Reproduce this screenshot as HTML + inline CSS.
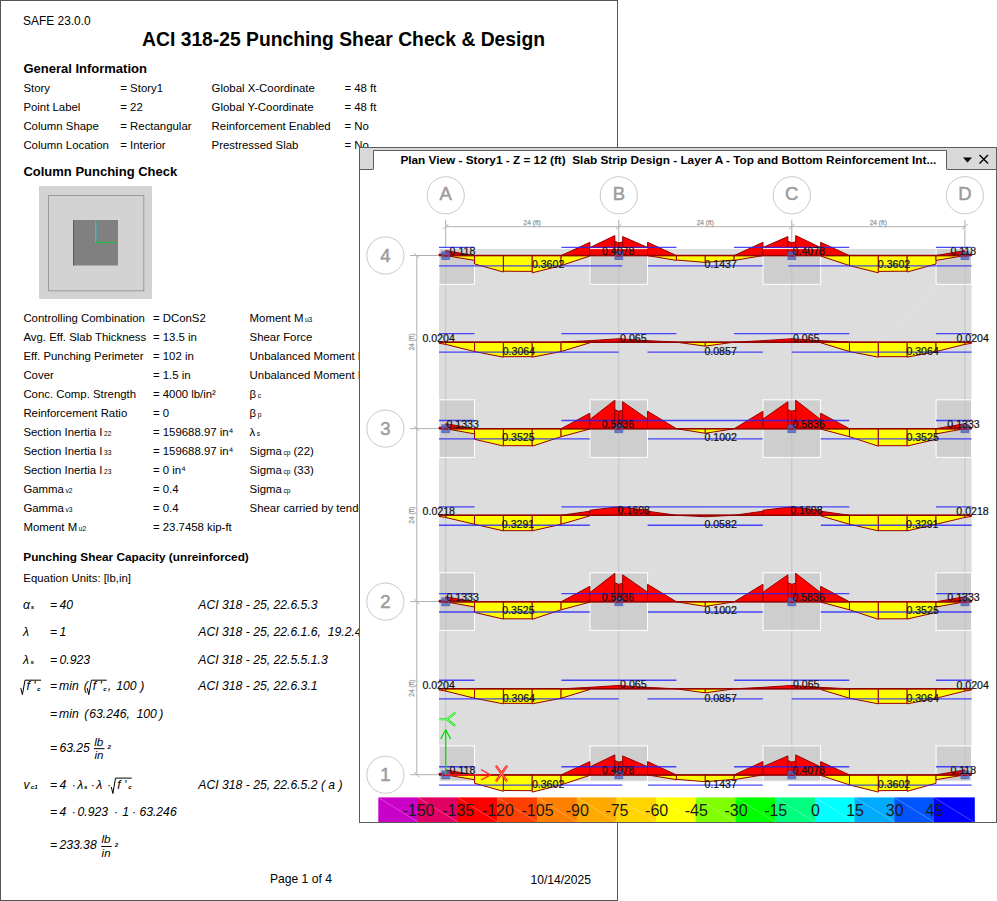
<!DOCTYPE html>
<html><head><meta charset="utf-8"><style>
html,body{margin:0;padding:0;background:#fff;width:997px;height:901px;overflow:hidden}
body{position:relative;font-family:"Liberation Sans",sans-serif;color:#000}
.doc{position:absolute;left:0;top:0;width:616px;height:899px;border:1px solid #555;background:#fff}
.t{position:absolute;white-space:pre;line-height:1;color:#000}
.sb{font-size:0.58em;margin-left:1.5px}
.sq{border-top:1px solid #000;padding-left:1px}
.fr{display:inline-block;vertical-align:middle;text-align:center;font-size:0.95em}
.nu{display:block;border-bottom:1px solid #000;line-height:1}
.de{display:block;line-height:1}
.sp2{font-size:0.6em;vertical-align:0.3em}
svg{position:absolute;left:0;top:0}
svg text{font-family:"Liberation Sans",sans-serif}
</style></head><body>
<div class="doc"></div>
<div class="t" style="left:23px;top:16.08px;font-size:11.95px;">SAFE 23.0.0</div>
<div class="t" style="left:142.1px;top:30.36px;font-size:19.3px;font-weight:bold">ACI 318-25 Punching Shear Check &amp; Design</div>
<div class="t" style="left:23.4px;top:62.00px;font-size:13px;font-weight:bold">General Information</div>
<div class="t" style="left:23.4px;top:82.95px;font-size:11.4px;">Story</div>
<div class="t" style="left:120.3px;top:82.95px;font-size:11.4px;">= Story1</div>
<div class="t" style="left:211.6px;top:82.95px;font-size:11.4px;">Global X-Coordinate</div>
<div class="t" style="left:344.4px;top:82.95px;font-size:11.4px;">= 48 ft</div>
<div class="t" style="left:23.4px;top:101.80px;font-size:11.4px;">Point Label</div>
<div class="t" style="left:120.3px;top:101.80px;font-size:11.4px;">= 22</div>
<div class="t" style="left:211.6px;top:101.80px;font-size:11.4px;">Global Y-Coordinate</div>
<div class="t" style="left:344.4px;top:101.80px;font-size:11.4px;">= 48 ft</div>
<div class="t" style="left:23.4px;top:120.65px;font-size:11.4px;">Column Shape</div>
<div class="t" style="left:120.3px;top:120.65px;font-size:11.4px;">= Rectangular</div>
<div class="t" style="left:211.6px;top:120.65px;font-size:11.4px;">Reinforcement Enabled</div>
<div class="t" style="left:344.4px;top:120.65px;font-size:11.4px;">= No</div>
<div class="t" style="left:23.4px;top:139.50px;font-size:11.4px;">Column Location</div>
<div class="t" style="left:120.3px;top:139.50px;font-size:11.4px;">= Interior</div>
<div class="t" style="left:211.6px;top:139.50px;font-size:11.4px;">Prestressed Slab</div>
<div class="t" style="left:344.4px;top:139.50px;font-size:11.4px;">= No</div>
<div class="t" style="left:23.4px;top:165.10px;font-size:13px;font-weight:bold">Column Punching Check</div>
<div class="t" style="left:23.4px;top:312.55px;font-size:11.4px;">Controlling Combination</div>
<div class="t" style="left:152.9px;top:312.55px;font-size:11.4px;">= DConS2</div>
<div class="t" style="left:249.6px;top:312.55px;font-size:11.4px;">Moment M<span class="sb">u3</span></div>
<div class="t" style="left:23.4px;top:331.58px;font-size:11.4px;">Avg. Eff. Slab Thickness</div>
<div class="t" style="left:152.9px;top:331.58px;font-size:11.4px;">= 13.5 in</div>
<div class="t" style="left:249.6px;top:331.58px;font-size:11.4px;">Shear Force</div>
<div class="t" style="left:23.4px;top:350.61px;font-size:11.4px;">Eff. Punching Perimeter</div>
<div class="t" style="left:152.9px;top:350.61px;font-size:11.4px;">= 102 in</div>
<div class="t" style="left:249.6px;top:350.61px;font-size:11.4px;">Unbalanced Moment M</div>
<div class="t" style="left:23.4px;top:369.64px;font-size:11.4px;">Cover</div>
<div class="t" style="left:152.9px;top:369.64px;font-size:11.4px;">= 1.5 in</div>
<div class="t" style="left:249.6px;top:369.64px;font-size:11.4px;">Unbalanced Moment M</div>
<div class="t" style="left:23.4px;top:388.67px;font-size:11.4px;">Conc. Comp. Strength</div>
<div class="t" style="left:152.9px;top:388.67px;font-size:11.4px;">= 4000 lb/in²</div>
<div class="t" style="left:249.6px;top:388.67px;font-size:11.4px;">β<span class="sb">c</span></div>
<div class="t" style="left:23.4px;top:407.70px;font-size:11.4px;">Reinforcement Ratio</div>
<div class="t" style="left:152.9px;top:407.70px;font-size:11.4px;">= 0</div>
<div class="t" style="left:249.6px;top:407.70px;font-size:11.4px;">β<span class="sb">p</span></div>
<div class="t" style="left:23.4px;top:426.73px;font-size:11.4px;">Section Inertia I<span class="sb">22</span></div>
<div class="t" style="left:152.9px;top:426.73px;font-size:11.4px;">= 159688.97 in⁴</div>
<div class="t" style="left:249.6px;top:426.73px;font-size:11.4px;">λ<span class="sb">s</span></div>
<div class="t" style="left:23.4px;top:445.76px;font-size:11.4px;">Section Inertia I<span class="sb">33</span></div>
<div class="t" style="left:152.9px;top:445.76px;font-size:11.4px;">= 159688.97 in⁴</div>
<div class="t" style="left:249.6px;top:445.76px;font-size:11.4px;">Sigma<span class="sb">cp</span> (22)</div>
<div class="t" style="left:23.4px;top:464.79px;font-size:11.4px;">Section Inertia I<span class="sb">23</span></div>
<div class="t" style="left:152.9px;top:464.79px;font-size:11.4px;">= 0 in⁴</div>
<div class="t" style="left:249.6px;top:464.79px;font-size:11.4px;">Sigma<span class="sb">cp</span> (33)</div>
<div class="t" style="left:23.4px;top:483.82px;font-size:11.4px;">Gamma<span class="sb">v2</span></div>
<div class="t" style="left:152.9px;top:483.82px;font-size:11.4px;">= 0.4</div>
<div class="t" style="left:249.6px;top:483.82px;font-size:11.4px;">Sigma<span class="sb">cp</span></div>
<div class="t" style="left:23.4px;top:502.85px;font-size:11.4px;">Gamma<span class="sb">v3</span></div>
<div class="t" style="left:152.9px;top:502.85px;font-size:11.4px;">= 0.4</div>
<div class="t" style="left:249.6px;top:502.85px;font-size:11.4px;">Shear carried by tendons</div>
<div class="t" style="left:23.4px;top:521.88px;font-size:11.4px;">Moment M<span class="sb">u2</span></div>
<div class="t" style="left:152.9px;top:521.88px;font-size:11.4px;">= 23.7458 kip-ft</div>
<div class="t" style="left:249.6px;top:521.88px;font-size:11.4px;"></div>
<div class="t" style="left:23.3px;top:552.11px;font-size:11.8px;font-weight:bold">Punching Shear Capacity (unreinforced)</div>
<div class="t" style="left:23.3px;top:573.45px;font-size:11.4px;">Equation Units: [lb,in]</div>
<div class="t" style="left:23px;top:598.67px;font-size:12.2px;font-style:italic">α</div>
<div class="t" style="left:30.8px;top:604.25px;font-size:6.2px;font-weight:bold;font-style:italic">s</div>
<div class="t" style="left:49.9px;top:598.67px;font-size:12.2px;font-style:italic">=</div>
<div class="t" style="left:59.6px;top:598.67px;font-size:12.2px;font-style:italic">40</div>
<div class="t" style="left:198.3px;top:598.67px;font-size:12.2px;font-style:italic">ACI 318 - 25, 22.6.5.3</div>
<div class="t" style="left:23px;top:626.17px;font-size:12.2px;font-style:italic">λ</div>
<div class="t" style="left:49.9px;top:626.17px;font-size:12.2px;font-style:italic">=</div>
<div class="t" style="left:59.6px;top:626.17px;font-size:12.2px;font-style:italic">1</div>
<div class="t" style="left:198.3px;top:626.17px;font-size:12.2px;font-style:italic">ACI 318 - 25, 22.6.1.6,  19.2.4</div>
<div class="t" style="left:23px;top:653.87px;font-size:12.2px;font-style:italic">λ</div>
<div class="t" style="left:30.5px;top:659.45px;font-size:6.2px;font-weight:bold;font-style:italic">s</div>
<div class="t" style="left:49.9px;top:653.87px;font-size:12.2px;font-style:italic">=</div>
<div class="t" style="left:59.6px;top:653.87px;font-size:12.2px;font-style:italic">0.923</div>
<div class="t" style="left:198.3px;top:653.87px;font-size:12.2px;font-style:italic">ACI 318 - 25, 22.5.5.1.3</div>
<div class="t" style="left:26.5px;top:679.97px;font-size:12.2px;font-style:italic">f '</div>
<div class="t" style="left:37px;top:685.55px;font-size:6.2px;font-weight:bold;font-style:italic">c</div>
<div class="t" style="left:49.9px;top:679.97px;font-size:12.2px;font-style:italic">=</div>
<div class="t" style="left:59.1px;top:679.97px;font-size:12.2px;font-style:italic">min</div>
<div class="t" style="left:83.7px;top:679.97px;font-size:12.2px;font-style:italic">(</div>
<div class="t" style="left:92.7px;top:679.97px;font-size:12.2px;font-style:italic">f '</div>
<div class="t" style="left:103.3px;top:685.55px;font-size:6.2px;font-weight:bold;font-style:italic">c</div>
<div class="t" style="left:107.8px;top:679.97px;font-size:12.2px;font-style:italic">,</div>
<div class="t" style="left:116.3px;top:679.97px;font-size:12.2px;font-style:italic">100</div>
<div class="t" style="left:140.2px;top:679.97px;font-size:12.2px;font-style:italic">)</div>
<div class="t" style="left:198.3px;top:679.97px;font-size:12.2px;font-style:italic">ACI 318 - 25, 22.6.3.1</div>
<div class="t" style="left:49.9px;top:708.07px;font-size:12.2px;font-style:italic">=</div>
<div class="t" style="left:59.1px;top:708.07px;font-size:12.2px;font-style:italic">min</div>
<div class="t" style="left:84.2px;top:708.07px;font-size:12.2px;font-style:italic">(</div>
<div class="t" style="left:89.2px;top:708.07px;font-size:12.2px;font-style:italic">63.246,</div>
<div class="t" style="left:136.4px;top:708.07px;font-size:12.2px;font-style:italic">100</div>
<div class="t" style="left:159.2px;top:708.07px;font-size:12.2px;font-style:italic">)</div>
<div class="t" style="left:49.9px;top:741.67px;font-size:12.2px;font-style:italic">=</div>
<div class="t" style="left:59.4px;top:741.67px;font-size:12.2px;font-style:italic">63.25</div>
<div class="t" style="left:94.2px;top:735.58px;font-size:11.6px;font-style:italic">lb</div>
<div class="t" style="left:94.4px;top:749.18px;font-size:11.6px;font-style:italic">in</div>
<div class="t" style="left:107.6px;top:744.25px;font-size:6.2px;font-weight:bold;font-style:italic">2</div>
<div class="t" style="left:23.4px;top:778.87px;font-size:12.2px;font-style:italic">v</div>
<div class="t" style="left:30.8px;top:784.45px;font-size:6.2px;font-weight:bold;font-style:italic">c1</div>
<div class="t" style="left:49.9px;top:778.87px;font-size:12.2px;font-style:italic">=</div>
<div class="t" style="left:59.5px;top:778.87px;font-size:12.2px;font-style:italic">4</div>
<div class="t" style="left:71.8px;top:778.87px;font-size:12.2px;font-style:italic">·</div>
<div class="t" style="left:77.2px;top:778.87px;font-size:12.2px;font-style:italic">λ</div>
<div class="t" style="left:84px;top:784.45px;font-size:6.2px;font-weight:bold;font-style:italic">s</div>
<div class="t" style="left:90.8px;top:778.87px;font-size:12.2px;font-style:italic">·</div>
<div class="t" style="left:96.2px;top:778.87px;font-size:12.2px;font-style:italic">λ</div>
<div class="t" style="left:106.9px;top:778.87px;font-size:12.2px;font-style:italic">·</div>
<div class="t" style="left:117.3px;top:778.87px;font-size:12.2px;font-style:italic">f '</div>
<div class="t" style="left:128.3px;top:784.45px;font-size:6.2px;font-weight:bold;font-style:italic">c</div>
<div class="t" style="left:198.3px;top:778.87px;font-size:12.2px;font-style:italic">ACI 318 - 25, 22.6.5.2 ( a )</div>
<div class="t" style="left:49.9px;top:806.37px;font-size:12.2px;font-style:italic">=</div>
<div class="t" style="left:59.5px;top:806.37px;font-size:12.2px;font-style:italic">4</div>
<div class="t" style="left:71.8px;top:806.37px;font-size:12.2px;font-style:italic">·</div>
<div class="t" style="left:77.6px;top:806.37px;font-size:12.2px;font-style:italic">0.923</div>
<div class="t" style="left:113.9px;top:806.37px;font-size:12.2px;font-style:italic">·</div>
<div class="t" style="left:122.3px;top:806.37px;font-size:12.2px;font-style:italic">1</div>
<div class="t" style="left:132px;top:806.37px;font-size:12.2px;font-style:italic">·</div>
<div class="t" style="left:139.4px;top:806.37px;font-size:12.2px;font-style:italic">63.246</div>
<div class="t" style="left:49.9px;top:839.47px;font-size:12.2px;font-style:italic">=</div>
<div class="t" style="left:59.4px;top:839.47px;font-size:12.2px;font-style:italic">233.38</div>
<div class="t" style="left:101.4px;top:833.38px;font-size:11.6px;font-style:italic">lb</div>
<div class="t" style="left:101.60000000000001px;top:846.98px;font-size:11.6px;font-style:italic">in</div>
<div class="t" style="left:114.8px;top:842.05px;font-size:6.2px;font-weight:bold;font-style:italic">2</div>
<div class="t" style="left:270px;top:873.06px;font-size:12.1px;">Page 1 of 4</div>
<div class="t" style="left:530.5px;top:874.06px;font-size:12.1px;">10/14/2025</div>
<svg width="997" height="901" style="position:absolute;left:0;top:0"><rect x="39" y="186" width="113" height="113" fill="#d3d3d3"/><rect x="48.5" y="195.5" width="95.3" height="95.3" fill="none" stroke="#9a9a9a" stroke-width="1"/><rect x="73" y="220" width="45" height="45.5" fill="#808080"/><line x1="73.5" y1="220" x2="73.5" y2="265.5" stroke="#5a5a5a" stroke-width="1"/><line x1="95.7" y1="242.5" x2="95.7" y2="221" stroke="#00d8e8" stroke-width="1.2"/><line x1="95.7" y1="242.5" x2="116" y2="242.5" stroke="#20c040" stroke-width="1.2"/><path d="M20.8 688.0 L22.4 694.6 L25.0 680.2 H41.1" fill="none" stroke="#000" stroke-width="1"/><path d="M87.2 688.0 L88.8 694.6 L91.4 680.2 H106.8" fill="none" stroke="#000" stroke-width="1"/><line x1="94.0" y1="748.7" x2="104.5" y2="748.7" stroke="#000" stroke-width="1"/><path d="M111.3 786.9 L112.9 793.5 L115.5 778.1 H131.7" fill="none" stroke="#000" stroke-width="1"/><line x1="101.2" y1="846.5" x2="111.7" y2="846.5" stroke="#000" stroke-width="1"/></svg>

<svg width="997" height="901" viewBox="0 0 997 901">
<rect x="359.5" y="147.5" width="637" height="675" fill="#fff" stroke="#5c5c5c" stroke-width="1"/>
<rect x="360" y="148" width="636" height="21" fill="#d9d9d9"/>
<path d="M373.5 169 V150.5 H946.5 V169" fill="#fff" stroke="#5c5c5c" stroke-width="1"/>
<path d="M360 169.5 H373.5 M946.5 169.5 H996" stroke="#5c5c5c" stroke-width="1"/>
<text x="400.4" y="164" font-size="11.8" font-weight="bold" fill="#000" style="white-space:pre">Plan View - Story1 - Z = 12 (ft)  Slab Strip Design - Layer A - Top and Bottom Reinforcement Int...</text>
<path d="M963 157.5 H972 L967.5 162.5 Z" fill="#000"/>
<path d="M979.5 155 L988 163.5 M988 155 L979.5 163.5" stroke="#000" stroke-width="1.4"/>
<rect x="439.0" y="249.0" width="532.6" height="532.2" fill="#dddddd"/>
<rect x="439.0" y="248.5" width="35.5" height="35.8" fill="#cecece"/>
<rect x="590.0" y="248.5" width="57.6" height="35.8" fill="#cecece"/>
<rect x="763.0" y="248.5" width="57.6" height="35.8" fill="#cecece"/>
<rect x="936.1" y="248.5" width="35.5" height="35.8" fill="#cecece"/>
<rect x="439.0" y="399.8" width="35.5" height="57.6" fill="#cecece"/>
<rect x="590.0" y="399.8" width="57.6" height="57.6" fill="#cecece"/>
<rect x="763.0" y="399.8" width="57.6" height="57.6" fill="#cecece"/>
<rect x="936.1" y="399.8" width="35.5" height="57.6" fill="#cecece"/>
<rect x="439.0" y="572.8" width="35.5" height="57.6" fill="#cecece"/>
<rect x="590.0" y="572.8" width="57.6" height="57.6" fill="#cecece"/>
<rect x="763.0" y="572.8" width="57.6" height="57.6" fill="#cecece"/>
<rect x="936.1" y="572.8" width="35.5" height="57.6" fill="#cecece"/>
<rect x="439.0" y="745.9" width="35.5" height="35.3" fill="#cecece"/>
<rect x="590.0" y="745.9" width="57.6" height="35.3" fill="#cecece"/>
<rect x="763.0" y="745.9" width="57.6" height="35.3" fill="#cecece"/>
<rect x="936.1" y="745.9" width="35.5" height="35.3" fill="#cecece"/>
<line x1="439.0" y1="781.2" x2="971.6" y2="249.0" stroke="#fff" stroke-opacity="0.22" stroke-width="1"/>
<line x1="445.7" y1="219.6" x2="445.7" y2="249.0" stroke="#b0b0b0" stroke-width="1"/>
<line x1="445.7" y1="249.0" x2="445.7" y2="781.2" stroke="#c2c2c2" stroke-width="1"/>
<line x1="618.8" y1="219.6" x2="618.8" y2="249.0" stroke="#b0b0b0" stroke-width="1"/>
<line x1="618.8" y1="249.0" x2="618.8" y2="781.2" stroke="#c2c2c2" stroke-width="1"/>
<line x1="791.8" y1="219.6" x2="791.8" y2="249.0" stroke="#b0b0b0" stroke-width="1"/>
<line x1="791.8" y1="249.0" x2="791.8" y2="781.2" stroke="#c2c2c2" stroke-width="1"/>
<line x1="964.9" y1="219.6" x2="964.9" y2="249.0" stroke="#b0b0b0" stroke-width="1"/>
<line x1="964.9" y1="249.0" x2="964.9" y2="781.2" stroke="#c2c2c2" stroke-width="1"/>
<line x1="410" y1="255.5" x2="971.6" y2="255.5" stroke="#b0b0b0" stroke-width="1"/>
<line x1="410" y1="428.6" x2="971.6" y2="428.6" stroke="#b0b0b0" stroke-width="1"/>
<line x1="410" y1="601.6" x2="971.6" y2="601.6" stroke="#b0b0b0" stroke-width="1"/>
<line x1="410" y1="774.7" x2="971.6" y2="774.7" stroke="#b0b0b0" stroke-width="1"/>
<line x1="445.7" y1="226.7" x2="964.9" y2="226.7" stroke="#b0b0b0" stroke-width="1"/>
<line x1="416.8" y1="255.5" x2="416.8" y2="774.7" stroke="#b0b0b0" stroke-width="1"/>
<line x1="443.1" y1="229.3" x2="448.3" y2="224.1" stroke="#b0b0b0" stroke-width="1"/>
<line x1="616.1" y1="229.3" x2="621.4" y2="224.1" stroke="#b0b0b0" stroke-width="1"/>
<line x1="789.2" y1="229.3" x2="794.4" y2="224.1" stroke="#b0b0b0" stroke-width="1"/>
<line x1="962.3" y1="229.3" x2="967.5" y2="224.1" stroke="#b0b0b0" stroke-width="1"/>
<line x1="414.2" y1="252.9" x2="419.4" y2="258.1" stroke="#b0b0b0" stroke-width="1"/>
<line x1="414.2" y1="425.9" x2="419.4" y2="431.2" stroke="#b0b0b0" stroke-width="1"/>
<line x1="414.2" y1="599.0" x2="419.4" y2="604.2" stroke="#b0b0b0" stroke-width="1"/>
<line x1="414.2" y1="772.1" x2="419.4" y2="777.3" stroke="#b0b0b0" stroke-width="1"/>
<text x="523.6" y="224.7" font-size="7.8" fill="#989898" stroke="#989898" stroke-width="0.25" textLength="17.2" lengthAdjust="spacingAndGlyphs">24 (ft)</text>
<text transform="translate(414.1 342.0) rotate(-90)" x="-8.6" y="0" font-size="7.8" fill="#989898" stroke="#989898" stroke-width="0.25" textLength="17.2" lengthAdjust="spacingAndGlyphs">24 (ft)</text>
<text x="696.7" y="224.7" font-size="7.8" fill="#989898" stroke="#989898" stroke-width="0.25" textLength="17.2" lengthAdjust="spacingAndGlyphs">24 (ft)</text>
<text transform="translate(414.1 515.1) rotate(-90)" x="-8.6" y="0" font-size="7.8" fill="#989898" stroke="#989898" stroke-width="0.25" textLength="17.2" lengthAdjust="spacingAndGlyphs">24 (ft)</text>
<text x="869.7" y="224.7" font-size="7.8" fill="#989898" stroke="#989898" stroke-width="0.25" textLength="17.2" lengthAdjust="spacingAndGlyphs">24 (ft)</text>
<text transform="translate(414.1 688.1) rotate(-90)" x="-8.6" y="0" font-size="7.8" fill="#989898" stroke="#989898" stroke-width="0.25" textLength="17.2" lengthAdjust="spacingAndGlyphs">24 (ft)</text>
<circle cx="445.7" cy="195.3" r="18.6" fill="#fff" stroke="#c8c8c8" stroke-width="1"/>
<text x="445.7" y="200.1" font-size="18.5" fill="#9c9c9c" stroke="#9c9c9c" stroke-width="0.5" text-anchor="middle">A</text>
<circle cx="618.8" cy="195.3" r="18.6" fill="#fff" stroke="#c8c8c8" stroke-width="1"/>
<text x="618.8" y="200.1" font-size="18.5" fill="#9c9c9c" stroke="#9c9c9c" stroke-width="0.5" text-anchor="middle">B</text>
<circle cx="791.8" cy="195.3" r="18.6" fill="#fff" stroke="#c8c8c8" stroke-width="1"/>
<text x="791.8" y="200.1" font-size="18.5" fill="#9c9c9c" stroke="#9c9c9c" stroke-width="0.5" text-anchor="middle">C</text>
<circle cx="964.9" cy="195.3" r="18.6" fill="#fff" stroke="#c8c8c8" stroke-width="1"/>
<text x="964.9" y="200.1" font-size="18.5" fill="#9c9c9c" stroke="#9c9c9c" stroke-width="0.5" text-anchor="middle">D</text>
<circle cx="385.4" cy="255.5" r="18.6" fill="#fff" stroke="#c8c8c8" stroke-width="1"/>
<text x="385.4" y="261.6" font-size="18.5" fill="#9c9c9c" stroke="#9c9c9c" stroke-width="0.5" text-anchor="middle">4</text>
<circle cx="385.4" cy="428.6" r="18.6" fill="#fff" stroke="#c8c8c8" stroke-width="1"/>
<text x="385.4" y="434.7" font-size="18.5" fill="#9c9c9c" stroke="#9c9c9c" stroke-width="0.5" text-anchor="middle">3</text>
<circle cx="385.4" cy="601.6" r="18.6" fill="#fff" stroke="#c8c8c8" stroke-width="1"/>
<text x="385.4" y="607.7" font-size="18.5" fill="#9c9c9c" stroke="#9c9c9c" stroke-width="0.5" text-anchor="middle">2</text>
<circle cx="385.4" cy="774.7" r="18.6" fill="#fff" stroke="#c8c8c8" stroke-width="1"/>
<text x="385.4" y="780.8" font-size="18.5" fill="#9c9c9c" stroke="#9c9c9c" stroke-width="0.5" text-anchor="middle">1</text>
<rect x="439.0" y="248.5" width="35.5" height="35.8" fill="none" stroke="#fff" stroke-width="1"/>
<rect x="590.0" y="248.5" width="57.6" height="35.8" fill="none" stroke="#fff" stroke-width="1"/>
<rect x="763.0" y="248.5" width="57.6" height="35.8" fill="none" stroke="#fff" stroke-width="1"/>
<rect x="936.1" y="248.5" width="35.5" height="35.8" fill="none" stroke="#fff" stroke-width="1"/>
<rect x="439.0" y="399.8" width="35.5" height="57.6" fill="none" stroke="#fff" stroke-width="1"/>
<rect x="590.0" y="399.8" width="57.6" height="57.6" fill="none" stroke="#fff" stroke-width="1"/>
<rect x="763.0" y="399.8" width="57.6" height="57.6" fill="none" stroke="#fff" stroke-width="1"/>
<rect x="936.1" y="399.8" width="35.5" height="57.6" fill="none" stroke="#fff" stroke-width="1"/>
<rect x="439.0" y="572.8" width="35.5" height="57.6" fill="none" stroke="#fff" stroke-width="1"/>
<rect x="590.0" y="572.8" width="57.6" height="57.6" fill="none" stroke="#fff" stroke-width="1"/>
<rect x="763.0" y="572.8" width="57.6" height="57.6" fill="none" stroke="#fff" stroke-width="1"/>
<rect x="936.1" y="572.8" width="35.5" height="57.6" fill="none" stroke="#fff" stroke-width="1"/>
<rect x="439.0" y="745.9" width="35.5" height="35.3" fill="none" stroke="#fff" stroke-width="1"/>
<rect x="590.0" y="745.9" width="57.6" height="35.3" fill="none" stroke="#fff" stroke-width="1"/>
<rect x="763.0" y="745.9" width="57.6" height="35.3" fill="none" stroke="#fff" stroke-width="1"/>
<rect x="936.1" y="745.9" width="35.5" height="35.3" fill="none" stroke="#fff" stroke-width="1"/>
<polygon points="445.70,255.60 445.70,255.60 474.54,260.40 474.54,255.60" fill="#ffff00" stroke="#960000" stroke-width="1" stroke-linejoin="miter"/>
<polygon points="474.54,255.60 474.54,264.00 503.38,272.00 503.38,255.60" fill="#ffff00" stroke="#960000" stroke-width="1" stroke-linejoin="miter"/>
<polygon points="503.38,255.60 503.38,271.20 532.23,271.40 532.23,255.60" fill="#ffff00" stroke="#960000" stroke-width="1" stroke-linejoin="miter"/>
<polygon points="532.23,255.60 532.23,272.80 561.07,265.60 561.07,255.60" fill="#ffff00" stroke="#960000" stroke-width="1" stroke-linejoin="miter"/>
<polygon points="561.07,255.60 561.07,265.60 589.91,256.00 589.91,255.60" fill="#ffff00" stroke="#960000" stroke-width="1" stroke-linejoin="miter"/>
<polygon points="647.59,255.60 647.59,255.60 676.43,260.40 676.43,255.60" fill="#ffff00" stroke="#960000" stroke-width="1" stroke-linejoin="miter"/>
<polygon points="676.43,255.60 676.43,260.00 705.28,262.40 705.28,255.60" fill="#ffff00" stroke="#960000" stroke-width="1" stroke-linejoin="miter"/>
<polygon points="705.28,255.60 705.28,262.40 734.12,260.00 734.12,255.60" fill="#ffff00" stroke="#960000" stroke-width="1" stroke-linejoin="miter"/>
<polygon points="734.12,255.60 734.12,260.40 762.96,255.60 762.96,255.60" fill="#ffff00" stroke="#960000" stroke-width="1" stroke-linejoin="miter"/>
<polygon points="820.64,255.60 820.64,256.00 849.48,265.60 849.48,255.60" fill="#ffff00" stroke="#960000" stroke-width="1" stroke-linejoin="miter"/>
<polygon points="849.48,255.60 849.48,265.60 878.33,272.80 878.33,255.60" fill="#ffff00" stroke="#960000" stroke-width="1" stroke-linejoin="miter"/>
<polygon points="878.33,255.60 878.33,271.40 907.17,271.20 907.17,255.60" fill="#ffff00" stroke="#960000" stroke-width="1" stroke-linejoin="miter"/>
<polygon points="907.17,255.60 907.17,272.00 936.01,264.00 936.01,255.60" fill="#ffff00" stroke="#960000" stroke-width="1" stroke-linejoin="miter"/>
<polygon points="936.01,255.60 936.01,260.40 964.85,255.60 964.85,255.60" fill="#ffff00" stroke="#960000" stroke-width="1" stroke-linejoin="miter"/>
<polygon points="445.70,255.60 445.70,250.60 474.54,255.60 474.54,255.60" fill="#ff0000" stroke="#960000" stroke-width="1" stroke-linejoin="miter"/>
<polygon points="561.07,255.60 561.07,255.60 589.91,242.30 589.91,255.60" fill="#ff0000" stroke="#960000" stroke-width="1" stroke-linejoin="miter"/>
<polygon points="589.91,255.60 589.91,247.60 614.85,235.60 614.85,255.60" fill="#ff0000" stroke="#960000" stroke-width="1" stroke-linejoin="miter"/>
<polygon points="622.65,255.60 622.65,236.60 647.59,247.40 647.59,255.60" fill="#ff0000" stroke="#960000" stroke-width="1" stroke-linejoin="miter"/>
<polygon points="647.59,255.60 647.59,242.30 676.43,255.60 676.43,255.60" fill="#ff0000" stroke="#960000" stroke-width="1" stroke-linejoin="miter"/>
<polygon points="734.12,255.60 734.12,255.60 762.96,242.30 762.96,255.60" fill="#ff0000" stroke="#960000" stroke-width="1" stroke-linejoin="miter"/>
<polygon points="762.96,255.60 762.96,247.40 787.90,236.60 787.90,255.60" fill="#ff0000" stroke="#960000" stroke-width="1" stroke-linejoin="miter"/>
<polygon points="795.70,255.60 795.70,235.60 820.64,247.60 820.64,255.60" fill="#ff0000" stroke="#960000" stroke-width="1" stroke-linejoin="miter"/>
<polygon points="820.64,255.60 820.64,242.30 849.48,255.60 849.48,255.60" fill="#ff0000" stroke="#960000" stroke-width="1" stroke-linejoin="miter"/>
<polygon points="936.01,255.60 936.01,255.60 964.85,250.60 964.85,255.60" fill="#ff0000" stroke="#960000" stroke-width="1" stroke-linejoin="miter"/>
<polygon points="614.85,255.60 614.85,241.30 618.75,242.80 618.75,255.60" fill="#ff0000" stroke="#960000" stroke-width="1"/>
<polygon points="618.75,255.60 618.75,242.80 622.65,241.80 622.65,255.60" fill="#ff0000" stroke="#960000" stroke-width="1"/>
<polygon points="787.90,255.60 787.90,241.30 791.80,242.80 791.80,255.60" fill="#ff0000" stroke="#960000" stroke-width="1"/>
<polygon points="791.80,255.60 791.80,242.80 795.70,241.80 795.70,255.60" fill="#ff0000" stroke="#960000" stroke-width="1"/>
<polygon points="439.00,255.60 439.00,254.10 445.70,254.10 445.70,255.60" fill="#ff0000" stroke="#960000" stroke-width="1"/>
<polygon points="964.85,255.60 964.85,254.10 971.60,254.10 971.60,255.60" fill="#ff0000" stroke="#960000" stroke-width="1"/>
<line x1="439.0" y1="255.60" x2="971.6" y2="255.60" stroke="#960000" stroke-width="1.5"/>
<polygon points="445.70,342.15 445.70,344.35 474.54,351.55 474.54,342.15" fill="#ffff00" stroke="#960000" stroke-width="1" stroke-linejoin="miter"/>
<polygon points="474.54,342.15 474.54,351.55 503.38,357.15 503.38,342.15" fill="#ffff00" stroke="#960000" stroke-width="1" stroke-linejoin="miter"/>
<polygon points="503.38,342.15 503.38,356.65 532.23,356.65 532.23,342.15" fill="#ffff00" stroke="#960000" stroke-width="1" stroke-linejoin="miter"/>
<polygon points="532.23,342.15 532.23,357.15 561.07,351.55 561.07,342.15" fill="#ffff00" stroke="#960000" stroke-width="1" stroke-linejoin="miter"/>
<polygon points="561.07,342.15 561.07,351.55 589.91,342.75 589.91,342.15" fill="#ffff00" stroke="#960000" stroke-width="1" stroke-linejoin="miter"/>
<polygon points="676.43,342.15 676.43,342.15 705.28,346.15 705.28,342.15" fill="#ffff00" stroke="#960000" stroke-width="1" stroke-linejoin="miter"/>
<polygon points="705.28,342.15 705.28,346.15 734.12,342.15 734.12,342.15" fill="#ffff00" stroke="#960000" stroke-width="1" stroke-linejoin="miter"/>
<polygon points="820.64,342.15 820.64,342.75 849.48,351.55 849.48,342.15" fill="#ffff00" stroke="#960000" stroke-width="1" stroke-linejoin="miter"/>
<polygon points="849.48,342.15 849.48,351.55 878.33,357.15 878.33,342.15" fill="#ffff00" stroke="#960000" stroke-width="1" stroke-linejoin="miter"/>
<polygon points="878.33,342.15 878.33,356.65 907.17,356.65 907.17,342.15" fill="#ffff00" stroke="#960000" stroke-width="1" stroke-linejoin="miter"/>
<polygon points="907.17,342.15 907.17,357.15 936.01,351.55 936.01,342.15" fill="#ffff00" stroke="#960000" stroke-width="1" stroke-linejoin="miter"/>
<polygon points="936.01,342.15 936.01,351.55 964.85,344.35 964.85,342.15" fill="#ffff00" stroke="#960000" stroke-width="1" stroke-linejoin="miter"/>
<polygon points="561.07,342.15 561.07,342.15 589.91,340.65 589.91,342.15" fill="#ff0000" stroke="#960000" stroke-width="1" stroke-linejoin="miter"/>
<polygon points="589.91,342.15 589.91,340.65 618.75,338.75 618.75,342.15" fill="#ff0000" stroke="#960000" stroke-width="1" stroke-linejoin="miter"/>
<polygon points="618.75,342.15 618.75,338.75 647.59,340.65 647.59,342.15" fill="#ff0000" stroke="#960000" stroke-width="1" stroke-linejoin="miter"/>
<polygon points="647.59,342.15 647.59,340.65 676.43,342.15 676.43,342.15" fill="#ff0000" stroke="#960000" stroke-width="1" stroke-linejoin="miter"/>
<polygon points="734.12,342.15 734.12,342.15 762.96,340.65 762.96,342.15" fill="#ff0000" stroke="#960000" stroke-width="1" stroke-linejoin="miter"/>
<polygon points="762.96,342.15 762.96,340.65 791.80,338.75 791.80,342.15" fill="#ff0000" stroke="#960000" stroke-width="1" stroke-linejoin="miter"/>
<polygon points="791.80,342.15 791.80,338.75 820.64,340.65 820.64,342.15" fill="#ff0000" stroke="#960000" stroke-width="1" stroke-linejoin="miter"/>
<polygon points="820.64,342.15 820.64,340.65 849.48,342.15 849.48,342.15" fill="#ff0000" stroke="#960000" stroke-width="1" stroke-linejoin="miter"/>
<polygon points="439.00,342.15 439.00,343.25 445.70,344.35 445.70,342.15" fill="#ffff00" stroke="#960000" stroke-width="1"/>
<polygon points="964.85,342.15 964.85,344.35 971.60,343.25 971.60,342.15" fill="#ffff00" stroke="#960000" stroke-width="1"/>
<line x1="439.0" y1="342.15" x2="971.6" y2="342.15" stroke="#960000" stroke-width="1.5"/>
<polygon points="445.70,428.70 445.70,428.70 474.54,433.90 474.54,428.70" fill="#ffff00" stroke="#960000" stroke-width="1" stroke-linejoin="miter"/>
<polygon points="474.54,428.70 474.54,439.30 503.38,446.00 503.38,428.70" fill="#ffff00" stroke="#960000" stroke-width="1" stroke-linejoin="miter"/>
<polygon points="503.38,428.70 503.38,445.70 532.23,445.70 532.23,428.70" fill="#ffff00" stroke="#960000" stroke-width="1" stroke-linejoin="miter"/>
<polygon points="532.23,428.70 532.23,446.20 561.07,436.70 561.07,428.70" fill="#ffff00" stroke="#960000" stroke-width="1" stroke-linejoin="miter"/>
<polygon points="561.07,428.70 561.07,436.70 589.91,429.00 589.91,428.70" fill="#ffff00" stroke="#960000" stroke-width="1" stroke-linejoin="miter"/>
<polygon points="676.43,428.70 676.43,428.70 705.28,433.30 705.28,428.70" fill="#ffff00" stroke="#960000" stroke-width="1" stroke-linejoin="miter"/>
<polygon points="705.28,428.70 705.28,433.30 734.12,428.70 734.12,428.70" fill="#ffff00" stroke="#960000" stroke-width="1" stroke-linejoin="miter"/>
<polygon points="820.64,428.70 820.64,429.00 849.48,436.70 849.48,428.70" fill="#ffff00" stroke="#960000" stroke-width="1" stroke-linejoin="miter"/>
<polygon points="849.48,428.70 849.48,436.70 878.33,446.20 878.33,428.70" fill="#ffff00" stroke="#960000" stroke-width="1" stroke-linejoin="miter"/>
<polygon points="878.33,428.70 878.33,445.70 907.17,445.70 907.17,428.70" fill="#ffff00" stroke="#960000" stroke-width="1" stroke-linejoin="miter"/>
<polygon points="907.17,428.70 907.17,446.00 936.01,439.30 936.01,428.70" fill="#ffff00" stroke="#960000" stroke-width="1" stroke-linejoin="miter"/>
<polygon points="936.01,428.70 936.01,433.90 964.85,428.70 964.85,428.70" fill="#ffff00" stroke="#960000" stroke-width="1" stroke-linejoin="miter"/>
<polygon points="445.70,428.70 445.70,423.70 474.54,428.70 474.54,428.70" fill="#ff0000" stroke="#960000" stroke-width="1" stroke-linejoin="miter"/>
<polygon points="561.07,428.70 561.07,428.70 589.91,413.20 589.91,428.70" fill="#ff0000" stroke="#960000" stroke-width="1" stroke-linejoin="miter"/>
<polygon points="589.91,428.70 589.91,419.50 614.85,400.20 614.85,428.70" fill="#ff0000" stroke="#960000" stroke-width="1" stroke-linejoin="miter"/>
<polygon points="622.65,428.70 622.65,401.70 647.59,419.10 647.59,428.70" fill="#ff0000" stroke="#960000" stroke-width="1" stroke-linejoin="miter"/>
<polygon points="647.59,428.70 647.59,411.20 676.43,428.70 676.43,428.70" fill="#ff0000" stroke="#960000" stroke-width="1" stroke-linejoin="miter"/>
<polygon points="734.12,428.70 734.12,428.70 762.96,411.20 762.96,428.70" fill="#ff0000" stroke="#960000" stroke-width="1" stroke-linejoin="miter"/>
<polygon points="762.96,428.70 762.96,419.10 787.90,401.70 787.90,428.70" fill="#ff0000" stroke="#960000" stroke-width="1" stroke-linejoin="miter"/>
<polygon points="795.70,428.70 795.70,400.20 820.64,419.50 820.64,428.70" fill="#ff0000" stroke="#960000" stroke-width="1" stroke-linejoin="miter"/>
<polygon points="820.64,428.70 820.64,413.20 849.48,428.70 849.48,428.70" fill="#ff0000" stroke="#960000" stroke-width="1" stroke-linejoin="miter"/>
<polygon points="936.01,428.70 936.01,428.70 964.85,423.70 964.85,428.70" fill="#ff0000" stroke="#960000" stroke-width="1" stroke-linejoin="miter"/>
<polygon points="614.85,428.70 614.85,409.70 618.75,411.20 618.75,428.70" fill="#ff0000" stroke="#960000" stroke-width="1"/>
<polygon points="618.75,428.70 618.75,411.20 622.65,410.20 622.65,428.70" fill="#ff0000" stroke="#960000" stroke-width="1"/>
<polygon points="787.90,428.70 787.90,409.70 791.80,411.20 791.80,428.70" fill="#ff0000" stroke="#960000" stroke-width="1"/>
<polygon points="791.80,428.70 791.80,411.20 795.70,410.20 795.70,428.70" fill="#ff0000" stroke="#960000" stroke-width="1"/>
<polygon points="439.00,428.70 439.00,427.20 445.70,427.20 445.70,428.70" fill="#ff0000" stroke="#960000" stroke-width="1"/>
<polygon points="964.85,428.70 964.85,427.20 971.60,427.20 971.60,428.70" fill="#ff0000" stroke="#960000" stroke-width="1"/>
<line x1="439.0" y1="428.70" x2="971.6" y2="428.70" stroke="#960000" stroke-width="1.5"/>
<polygon points="445.70,515.25 445.70,517.45 474.54,524.25 474.54,515.25" fill="#ffff00" stroke="#960000" stroke-width="1" stroke-linejoin="miter"/>
<polygon points="474.54,515.25 474.54,524.25 503.38,530.85 503.38,515.25" fill="#ffff00" stroke="#960000" stroke-width="1" stroke-linejoin="miter"/>
<polygon points="503.38,515.25 503.38,530.65 532.23,530.65 532.23,515.25" fill="#ffff00" stroke="#960000" stroke-width="1" stroke-linejoin="miter"/>
<polygon points="532.23,515.25 532.23,530.85 561.07,524.25 561.07,515.25" fill="#ffff00" stroke="#960000" stroke-width="1" stroke-linejoin="miter"/>
<polygon points="561.07,515.25 561.07,524.25 589.91,515.85 589.91,515.25" fill="#ffff00" stroke="#960000" stroke-width="1" stroke-linejoin="miter"/>
<polygon points="676.43,515.25 676.43,515.25 705.28,516.75 705.28,515.25" fill="#ffff00" stroke="#960000" stroke-width="1" stroke-linejoin="miter"/>
<polygon points="705.28,515.25 705.28,516.75 734.12,515.25 734.12,515.25" fill="#ffff00" stroke="#960000" stroke-width="1" stroke-linejoin="miter"/>
<polygon points="820.64,515.25 820.64,515.85 849.48,524.25 849.48,515.25" fill="#ffff00" stroke="#960000" stroke-width="1" stroke-linejoin="miter"/>
<polygon points="849.48,515.25 849.48,524.25 878.33,530.85 878.33,515.25" fill="#ffff00" stroke="#960000" stroke-width="1" stroke-linejoin="miter"/>
<polygon points="878.33,515.25 878.33,530.65 907.17,530.65 907.17,515.25" fill="#ffff00" stroke="#960000" stroke-width="1" stroke-linejoin="miter"/>
<polygon points="907.17,515.25 907.17,530.85 936.01,524.25 936.01,515.25" fill="#ffff00" stroke="#960000" stroke-width="1" stroke-linejoin="miter"/>
<polygon points="936.01,515.25 936.01,524.25 964.85,517.45 964.85,515.25" fill="#ffff00" stroke="#960000" stroke-width="1" stroke-linejoin="miter"/>
<polygon points="561.07,515.25 561.07,515.25 589.91,511.25 589.91,515.25" fill="#ff0000" stroke="#960000" stroke-width="1" stroke-linejoin="miter"/>
<polygon points="589.91,515.25 589.91,510.25 618.75,506.85 618.75,515.25" fill="#ff0000" stroke="#960000" stroke-width="1" stroke-linejoin="miter"/>
<polygon points="618.75,515.25 618.75,506.85 647.59,510.25 647.59,515.25" fill="#ff0000" stroke="#960000" stroke-width="1" stroke-linejoin="miter"/>
<polygon points="647.59,515.25 647.59,511.25 676.43,515.25 676.43,515.25" fill="#ff0000" stroke="#960000" stroke-width="1" stroke-linejoin="miter"/>
<polygon points="734.12,515.25 734.12,515.25 762.96,511.25 762.96,515.25" fill="#ff0000" stroke="#960000" stroke-width="1" stroke-linejoin="miter"/>
<polygon points="762.96,515.25 762.96,510.25 791.80,506.85 791.80,515.25" fill="#ff0000" stroke="#960000" stroke-width="1" stroke-linejoin="miter"/>
<polygon points="791.80,515.25 791.80,506.85 820.64,510.25 820.64,515.25" fill="#ff0000" stroke="#960000" stroke-width="1" stroke-linejoin="miter"/>
<polygon points="820.64,515.25 820.64,511.25 849.48,515.25 849.48,515.25" fill="#ff0000" stroke="#960000" stroke-width="1" stroke-linejoin="miter"/>
<polygon points="439.00,515.25 439.00,516.35 445.70,517.45 445.70,515.25" fill="#ffff00" stroke="#960000" stroke-width="1"/>
<polygon points="964.85,515.25 964.85,517.45 971.60,516.35 971.60,515.25" fill="#ffff00" stroke="#960000" stroke-width="1"/>
<line x1="439.0" y1="515.25" x2="971.6" y2="515.25" stroke="#960000" stroke-width="1.5"/>
<polygon points="445.70,601.80 445.70,601.80 474.54,607.00 474.54,601.80" fill="#ffff00" stroke="#960000" stroke-width="1" stroke-linejoin="miter"/>
<polygon points="474.54,601.80 474.54,612.40 503.38,619.10 503.38,601.80" fill="#ffff00" stroke="#960000" stroke-width="1" stroke-linejoin="miter"/>
<polygon points="503.38,601.80 503.38,618.80 532.23,618.80 532.23,601.80" fill="#ffff00" stroke="#960000" stroke-width="1" stroke-linejoin="miter"/>
<polygon points="532.23,601.80 532.23,619.30 561.07,609.80 561.07,601.80" fill="#ffff00" stroke="#960000" stroke-width="1" stroke-linejoin="miter"/>
<polygon points="561.07,601.80 561.07,609.80 589.91,602.10 589.91,601.80" fill="#ffff00" stroke="#960000" stroke-width="1" stroke-linejoin="miter"/>
<polygon points="676.43,601.80 676.43,601.80 705.28,606.40 705.28,601.80" fill="#ffff00" stroke="#960000" stroke-width="1" stroke-linejoin="miter"/>
<polygon points="705.28,601.80 705.28,606.40 734.12,601.80 734.12,601.80" fill="#ffff00" stroke="#960000" stroke-width="1" stroke-linejoin="miter"/>
<polygon points="820.64,601.80 820.64,602.10 849.48,609.80 849.48,601.80" fill="#ffff00" stroke="#960000" stroke-width="1" stroke-linejoin="miter"/>
<polygon points="849.48,601.80 849.48,609.80 878.33,619.30 878.33,601.80" fill="#ffff00" stroke="#960000" stroke-width="1" stroke-linejoin="miter"/>
<polygon points="878.33,601.80 878.33,618.80 907.17,618.80 907.17,601.80" fill="#ffff00" stroke="#960000" stroke-width="1" stroke-linejoin="miter"/>
<polygon points="907.17,601.80 907.17,619.10 936.01,612.40 936.01,601.80" fill="#ffff00" stroke="#960000" stroke-width="1" stroke-linejoin="miter"/>
<polygon points="936.01,601.80 936.01,607.00 964.85,601.80 964.85,601.80" fill="#ffff00" stroke="#960000" stroke-width="1" stroke-linejoin="miter"/>
<polygon points="445.70,601.80 445.70,596.80 474.54,601.80 474.54,601.80" fill="#ff0000" stroke="#960000" stroke-width="1" stroke-linejoin="miter"/>
<polygon points="561.07,601.80 561.07,601.80 589.91,586.30 589.91,601.80" fill="#ff0000" stroke="#960000" stroke-width="1" stroke-linejoin="miter"/>
<polygon points="589.91,601.80 589.91,592.60 614.85,573.30 614.85,601.80" fill="#ff0000" stroke="#960000" stroke-width="1" stroke-linejoin="miter"/>
<polygon points="622.65,601.80 622.65,574.80 647.59,592.20 647.59,601.80" fill="#ff0000" stroke="#960000" stroke-width="1" stroke-linejoin="miter"/>
<polygon points="647.59,601.80 647.59,584.30 676.43,601.80 676.43,601.80" fill="#ff0000" stroke="#960000" stroke-width="1" stroke-linejoin="miter"/>
<polygon points="734.12,601.80 734.12,601.80 762.96,584.30 762.96,601.80" fill="#ff0000" stroke="#960000" stroke-width="1" stroke-linejoin="miter"/>
<polygon points="762.96,601.80 762.96,592.20 787.90,574.80 787.90,601.80" fill="#ff0000" stroke="#960000" stroke-width="1" stroke-linejoin="miter"/>
<polygon points="795.70,601.80 795.70,573.30 820.64,592.60 820.64,601.80" fill="#ff0000" stroke="#960000" stroke-width="1" stroke-linejoin="miter"/>
<polygon points="820.64,601.80 820.64,586.30 849.48,601.80 849.48,601.80" fill="#ff0000" stroke="#960000" stroke-width="1" stroke-linejoin="miter"/>
<polygon points="936.01,601.80 936.01,601.80 964.85,596.80 964.85,601.80" fill="#ff0000" stroke="#960000" stroke-width="1" stroke-linejoin="miter"/>
<polygon points="614.85,601.80 614.85,582.80 618.75,584.30 618.75,601.80" fill="#ff0000" stroke="#960000" stroke-width="1"/>
<polygon points="618.75,601.80 618.75,584.30 622.65,583.30 622.65,601.80" fill="#ff0000" stroke="#960000" stroke-width="1"/>
<polygon points="787.90,601.80 787.90,582.80 791.80,584.30 791.80,601.80" fill="#ff0000" stroke="#960000" stroke-width="1"/>
<polygon points="791.80,601.80 791.80,584.30 795.70,583.30 795.70,601.80" fill="#ff0000" stroke="#960000" stroke-width="1"/>
<polygon points="439.00,601.80 439.00,600.30 445.70,600.30 445.70,601.80" fill="#ff0000" stroke="#960000" stroke-width="1"/>
<polygon points="964.85,601.80 964.85,600.30 971.60,600.30 971.60,601.80" fill="#ff0000" stroke="#960000" stroke-width="1"/>
<line x1="439.0" y1="601.80" x2="971.6" y2="601.80" stroke="#960000" stroke-width="1.5"/>
<polygon points="445.70,688.85 445.70,691.05 474.54,698.25 474.54,688.85" fill="#ffff00" stroke="#960000" stroke-width="1" stroke-linejoin="miter"/>
<polygon points="474.54,688.85 474.54,698.25 503.38,703.85 503.38,688.85" fill="#ffff00" stroke="#960000" stroke-width="1" stroke-linejoin="miter"/>
<polygon points="503.38,688.85 503.38,703.35 532.23,703.35 532.23,688.85" fill="#ffff00" stroke="#960000" stroke-width="1" stroke-linejoin="miter"/>
<polygon points="532.23,688.85 532.23,703.85 561.07,698.25 561.07,688.85" fill="#ffff00" stroke="#960000" stroke-width="1" stroke-linejoin="miter"/>
<polygon points="561.07,688.85 561.07,698.25 589.91,689.45 589.91,688.85" fill="#ffff00" stroke="#960000" stroke-width="1" stroke-linejoin="miter"/>
<polygon points="676.43,688.85 676.43,688.85 705.28,692.85 705.28,688.85" fill="#ffff00" stroke="#960000" stroke-width="1" stroke-linejoin="miter"/>
<polygon points="705.28,688.85 705.28,692.85 734.12,688.85 734.12,688.85" fill="#ffff00" stroke="#960000" stroke-width="1" stroke-linejoin="miter"/>
<polygon points="820.64,688.85 820.64,689.45 849.48,698.25 849.48,688.85" fill="#ffff00" stroke="#960000" stroke-width="1" stroke-linejoin="miter"/>
<polygon points="849.48,688.85 849.48,698.25 878.33,703.85 878.33,688.85" fill="#ffff00" stroke="#960000" stroke-width="1" stroke-linejoin="miter"/>
<polygon points="878.33,688.85 878.33,703.35 907.17,703.35 907.17,688.85" fill="#ffff00" stroke="#960000" stroke-width="1" stroke-linejoin="miter"/>
<polygon points="907.17,688.85 907.17,703.85 936.01,698.25 936.01,688.85" fill="#ffff00" stroke="#960000" stroke-width="1" stroke-linejoin="miter"/>
<polygon points="936.01,688.85 936.01,698.25 964.85,691.05 964.85,688.85" fill="#ffff00" stroke="#960000" stroke-width="1" stroke-linejoin="miter"/>
<polygon points="561.07,688.85 561.07,688.85 589.91,687.35 589.91,688.85" fill="#ff0000" stroke="#960000" stroke-width="1" stroke-linejoin="miter"/>
<polygon points="589.91,688.85 589.91,687.35 618.75,685.45 618.75,688.85" fill="#ff0000" stroke="#960000" stroke-width="1" stroke-linejoin="miter"/>
<polygon points="618.75,688.85 618.75,685.45 647.59,687.35 647.59,688.85" fill="#ff0000" stroke="#960000" stroke-width="1" stroke-linejoin="miter"/>
<polygon points="647.59,688.85 647.59,687.35 676.43,688.85 676.43,688.85" fill="#ff0000" stroke="#960000" stroke-width="1" stroke-linejoin="miter"/>
<polygon points="734.12,688.85 734.12,688.85 762.96,687.35 762.96,688.85" fill="#ff0000" stroke="#960000" stroke-width="1" stroke-linejoin="miter"/>
<polygon points="762.96,688.85 762.96,687.35 791.80,685.45 791.80,688.85" fill="#ff0000" stroke="#960000" stroke-width="1" stroke-linejoin="miter"/>
<polygon points="791.80,688.85 791.80,685.45 820.64,687.35 820.64,688.85" fill="#ff0000" stroke="#960000" stroke-width="1" stroke-linejoin="miter"/>
<polygon points="820.64,688.85 820.64,687.35 849.48,688.85 849.48,688.85" fill="#ff0000" stroke="#960000" stroke-width="1" stroke-linejoin="miter"/>
<polygon points="439.00,688.85 439.00,689.95 445.70,691.05 445.70,688.85" fill="#ffff00" stroke="#960000" stroke-width="1"/>
<polygon points="964.85,688.85 964.85,691.05 971.60,689.95 971.60,688.85" fill="#ffff00" stroke="#960000" stroke-width="1"/>
<line x1="439.0" y1="688.85" x2="971.6" y2="688.85" stroke="#960000" stroke-width="1.5"/>
<polygon points="445.70,774.90 445.70,774.90 474.54,779.70 474.54,774.90" fill="#ffff00" stroke="#960000" stroke-width="1" stroke-linejoin="miter"/>
<polygon points="474.54,774.90 474.54,783.30 503.38,791.30 503.38,774.90" fill="#ffff00" stroke="#960000" stroke-width="1" stroke-linejoin="miter"/>
<polygon points="503.38,774.90 503.38,790.50 532.23,790.70 532.23,774.90" fill="#ffff00" stroke="#960000" stroke-width="1" stroke-linejoin="miter"/>
<polygon points="532.23,774.90 532.23,792.10 561.07,784.90 561.07,774.90" fill="#ffff00" stroke="#960000" stroke-width="1" stroke-linejoin="miter"/>
<polygon points="561.07,774.90 561.07,784.90 589.91,775.30 589.91,774.90" fill="#ffff00" stroke="#960000" stroke-width="1" stroke-linejoin="miter"/>
<polygon points="647.59,774.90 647.59,774.90 676.43,779.70 676.43,774.90" fill="#ffff00" stroke="#960000" stroke-width="1" stroke-linejoin="miter"/>
<polygon points="676.43,774.90 676.43,779.30 705.28,781.70 705.28,774.90" fill="#ffff00" stroke="#960000" stroke-width="1" stroke-linejoin="miter"/>
<polygon points="705.28,774.90 705.28,781.70 734.12,779.30 734.12,774.90" fill="#ffff00" stroke="#960000" stroke-width="1" stroke-linejoin="miter"/>
<polygon points="734.12,774.90 734.12,779.70 762.96,774.90 762.96,774.90" fill="#ffff00" stroke="#960000" stroke-width="1" stroke-linejoin="miter"/>
<polygon points="820.64,774.90 820.64,775.30 849.48,784.90 849.48,774.90" fill="#ffff00" stroke="#960000" stroke-width="1" stroke-linejoin="miter"/>
<polygon points="849.48,774.90 849.48,784.90 878.33,792.10 878.33,774.90" fill="#ffff00" stroke="#960000" stroke-width="1" stroke-linejoin="miter"/>
<polygon points="878.33,774.90 878.33,790.70 907.17,790.50 907.17,774.90" fill="#ffff00" stroke="#960000" stroke-width="1" stroke-linejoin="miter"/>
<polygon points="907.17,774.90 907.17,791.30 936.01,783.30 936.01,774.90" fill="#ffff00" stroke="#960000" stroke-width="1" stroke-linejoin="miter"/>
<polygon points="936.01,774.90 936.01,779.70 964.85,774.90 964.85,774.90" fill="#ffff00" stroke="#960000" stroke-width="1" stroke-linejoin="miter"/>
<polygon points="445.70,774.90 445.70,769.90 474.54,774.90 474.54,774.90" fill="#ff0000" stroke="#960000" stroke-width="1" stroke-linejoin="miter"/>
<polygon points="561.07,774.90 561.07,774.90 589.91,761.60 589.91,774.90" fill="#ff0000" stroke="#960000" stroke-width="1" stroke-linejoin="miter"/>
<polygon points="589.91,774.90 589.91,766.90 614.85,754.90 614.85,774.90" fill="#ff0000" stroke="#960000" stroke-width="1" stroke-linejoin="miter"/>
<polygon points="622.65,774.90 622.65,755.90 647.59,766.70 647.59,774.90" fill="#ff0000" stroke="#960000" stroke-width="1" stroke-linejoin="miter"/>
<polygon points="647.59,774.90 647.59,761.60 676.43,774.90 676.43,774.90" fill="#ff0000" stroke="#960000" stroke-width="1" stroke-linejoin="miter"/>
<polygon points="734.12,774.90 734.12,774.90 762.96,761.60 762.96,774.90" fill="#ff0000" stroke="#960000" stroke-width="1" stroke-linejoin="miter"/>
<polygon points="762.96,774.90 762.96,766.70 787.90,755.90 787.90,774.90" fill="#ff0000" stroke="#960000" stroke-width="1" stroke-linejoin="miter"/>
<polygon points="795.70,774.90 795.70,754.90 820.64,766.90 820.64,774.90" fill="#ff0000" stroke="#960000" stroke-width="1" stroke-linejoin="miter"/>
<polygon points="820.64,774.90 820.64,761.60 849.48,774.90 849.48,774.90" fill="#ff0000" stroke="#960000" stroke-width="1" stroke-linejoin="miter"/>
<polygon points="936.01,774.90 936.01,774.90 964.85,769.90 964.85,774.90" fill="#ff0000" stroke="#960000" stroke-width="1" stroke-linejoin="miter"/>
<polygon points="614.85,774.90 614.85,760.60 618.75,762.10 618.75,774.90" fill="#ff0000" stroke="#960000" stroke-width="1"/>
<polygon points="618.75,774.90 618.75,762.10 622.65,761.10 622.65,774.90" fill="#ff0000" stroke="#960000" stroke-width="1"/>
<polygon points="787.90,774.90 787.90,760.60 791.80,762.10 791.80,774.90" fill="#ff0000" stroke="#960000" stroke-width="1"/>
<polygon points="791.80,774.90 791.80,762.10 795.70,761.10 795.70,774.90" fill="#ff0000" stroke="#960000" stroke-width="1"/>
<polygon points="439.00,774.90 439.00,773.40 445.70,773.40 445.70,774.90" fill="#ff0000" stroke="#960000" stroke-width="1"/>
<polygon points="964.85,774.90 964.85,773.40 971.60,773.40 971.60,774.90" fill="#ff0000" stroke="#960000" stroke-width="1"/>
<line x1="439.0" y1="774.90" x2="971.6" y2="774.90" stroke="#960000" stroke-width="1.5"/>
<line x1="439.0" y1="248.6" x2="474.5" y2="248.6" stroke="#fff" stroke-width="1"/>
<line x1="590.0" y1="248.6" x2="647.5" y2="248.6" stroke="#fff" stroke-width="1"/>
<line x1="763.0" y1="248.6" x2="820.6" y2="248.6" stroke="#fff" stroke-width="1"/>
<line x1="936.1" y1="248.6" x2="971.6" y2="248.6" stroke="#fff" stroke-width="1"/>
<line x1="439" y1="247.40" x2="474.5" y2="247.40" stroke="#2222ff" stroke-opacity="0.82" stroke-width="1.35"/>
<line x1="561.4" y1="247.40" x2="676.4" y2="247.40" stroke="#2222ff" stroke-opacity="0.82" stroke-width="1.35"/>
<line x1="734" y1="247.40" x2="849.3" y2="247.40" stroke="#2222ff" stroke-opacity="0.82" stroke-width="1.35"/>
<line x1="936" y1="247.40" x2="971.6" y2="247.40" stroke="#2222ff" stroke-opacity="0.82" stroke-width="1.35"/>
<line x1="439" y1="265.80" x2="622.3" y2="265.80" stroke="#2222ff" stroke-opacity="0.82" stroke-width="1.35"/>
<line x1="648" y1="265.80" x2="762.7" y2="265.80" stroke="#2222ff" stroke-opacity="0.82" stroke-width="1.35"/>
<line x1="788.3" y1="265.80" x2="971.6" y2="265.80" stroke="#2222ff" stroke-opacity="0.82" stroke-width="1.35"/>
<line x1="439" y1="333.55" x2="474.5" y2="333.55" stroke="#2222ff" stroke-opacity="0.82" stroke-width="1.35"/>
<line x1="561.4" y1="333.55" x2="676.4" y2="333.55" stroke="#2222ff" stroke-opacity="0.82" stroke-width="1.35"/>
<line x1="734" y1="333.55" x2="849.3" y2="333.55" stroke="#2222ff" stroke-opacity="0.82" stroke-width="1.35"/>
<line x1="936" y1="333.55" x2="971.6" y2="333.55" stroke="#2222ff" stroke-opacity="0.82" stroke-width="1.35"/>
<line x1="439" y1="352.15" x2="618.7" y2="352.15" stroke="#2222ff" stroke-opacity="0.82" stroke-width="1.35"/>
<line x1="647.5" y1="352.15" x2="762.9" y2="352.15" stroke="#2222ff" stroke-opacity="0.82" stroke-width="1.35"/>
<line x1="791.7" y1="352.15" x2="971.6" y2="352.15" stroke="#2222ff" stroke-opacity="0.82" stroke-width="1.35"/>
<line x1="439" y1="420.50" x2="474.5" y2="420.50" stroke="#2222ff" stroke-opacity="0.82" stroke-width="1.35"/>
<line x1="561.4" y1="420.50" x2="849.3" y2="420.50" stroke="#2222ff" stroke-opacity="0.82" stroke-width="1.35"/>
<line x1="936" y1="420.50" x2="971.6" y2="420.50" stroke="#2222ff" stroke-opacity="0.82" stroke-width="1.35"/>
<line x1="439" y1="438.90" x2="589.8" y2="438.90" stroke="#2222ff" stroke-opacity="0.82" stroke-width="1.35"/>
<line x1="648" y1="438.90" x2="762.7" y2="438.90" stroke="#2222ff" stroke-opacity="0.82" stroke-width="1.35"/>
<line x1="820.7" y1="438.90" x2="971.6" y2="438.90" stroke="#2222ff" stroke-opacity="0.82" stroke-width="1.35"/>
<line x1="439" y1="506.85" x2="474.5" y2="506.85" stroke="#2222ff" stroke-opacity="0.82" stroke-width="1.35"/>
<line x1="561.4" y1="506.85" x2="849.3" y2="506.85" stroke="#2222ff" stroke-opacity="0.82" stroke-width="1.35"/>
<line x1="936" y1="506.85" x2="971.6" y2="506.85" stroke="#2222ff" stroke-opacity="0.82" stroke-width="1.35"/>
<line x1="439" y1="525.25" x2="589.8" y2="525.25" stroke="#2222ff" stroke-opacity="0.82" stroke-width="1.35"/>
<line x1="647.6" y1="525.25" x2="762.8" y2="525.25" stroke="#2222ff" stroke-opacity="0.82" stroke-width="1.35"/>
<line x1="820.9" y1="525.25" x2="971.6" y2="525.25" stroke="#2222ff" stroke-opacity="0.82" stroke-width="1.35"/>
<line x1="439" y1="593.60" x2="474.5" y2="593.60" stroke="#2222ff" stroke-opacity="0.82" stroke-width="1.35"/>
<line x1="561.4" y1="593.60" x2="849.3" y2="593.60" stroke="#2222ff" stroke-opacity="0.82" stroke-width="1.35"/>
<line x1="936" y1="593.60" x2="971.6" y2="593.60" stroke="#2222ff" stroke-opacity="0.82" stroke-width="1.35"/>
<line x1="439" y1="612.00" x2="589.8" y2="612.00" stroke="#2222ff" stroke-opacity="0.82" stroke-width="1.35"/>
<line x1="648" y1="612.00" x2="762.7" y2="612.00" stroke="#2222ff" stroke-opacity="0.82" stroke-width="1.35"/>
<line x1="820.7" y1="612.00" x2="971.6" y2="612.00" stroke="#2222ff" stroke-opacity="0.82" stroke-width="1.35"/>
<line x1="439" y1="680.25" x2="474.5" y2="680.25" stroke="#2222ff" stroke-opacity="0.82" stroke-width="1.35"/>
<line x1="561.4" y1="680.25" x2="676.4" y2="680.25" stroke="#2222ff" stroke-opacity="0.82" stroke-width="1.35"/>
<line x1="734" y1="680.25" x2="849.3" y2="680.25" stroke="#2222ff" stroke-opacity="0.82" stroke-width="1.35"/>
<line x1="936" y1="680.25" x2="971.6" y2="680.25" stroke="#2222ff" stroke-opacity="0.82" stroke-width="1.35"/>
<line x1="439" y1="698.85" x2="618.7" y2="698.85" stroke="#2222ff" stroke-opacity="0.82" stroke-width="1.35"/>
<line x1="647.5" y1="698.85" x2="762.9" y2="698.85" stroke="#2222ff" stroke-opacity="0.82" stroke-width="1.35"/>
<line x1="791.7" y1="698.85" x2="971.6" y2="698.85" stroke="#2222ff" stroke-opacity="0.82" stroke-width="1.35"/>
<line x1="439" y1="766.70" x2="474.5" y2="766.70" stroke="#2222ff" stroke-opacity="0.82" stroke-width="1.35"/>
<line x1="561.4" y1="766.70" x2="676.4" y2="766.70" stroke="#2222ff" stroke-opacity="0.82" stroke-width="1.35"/>
<line x1="734" y1="766.70" x2="849.3" y2="766.70" stroke="#2222ff" stroke-opacity="0.82" stroke-width="1.35"/>
<line x1="936" y1="766.70" x2="971.6" y2="766.70" stroke="#2222ff" stroke-opacity="0.82" stroke-width="1.35"/>
<line x1="439" y1="785.10" x2="622.3" y2="785.10" stroke="#2222ff" stroke-opacity="0.82" stroke-width="1.35"/>
<line x1="648" y1="785.10" x2="762.7" y2="785.10" stroke="#2222ff" stroke-opacity="0.82" stroke-width="1.35"/>
<line x1="788.3" y1="785.10" x2="971.6" y2="785.10" stroke="#2222ff" stroke-opacity="0.82" stroke-width="1.35"/>
<rect x="441.8" y="251.7" width="7.8" height="7.8" fill="#4e68c4" fill-opacity="0.8" stroke="#3c50b0" stroke-opacity="0.6" stroke-width="1"/>
<line x1="443.2" y1="255.9" x2="448.2" y2="255.9" stroke="#c00000" stroke-width="1.3"/>
<rect x="614.9" y="251.7" width="7.8" height="7.8" fill="#4e68c4" fill-opacity="0.8" stroke="#3c50b0" stroke-opacity="0.6" stroke-width="1"/>
<line x1="616.2" y1="255.9" x2="621.2" y2="255.9" stroke="#c00000" stroke-width="1.3"/>
<rect x="787.9" y="251.7" width="7.8" height="7.8" fill="#4e68c4" fill-opacity="0.8" stroke="#3c50b0" stroke-opacity="0.6" stroke-width="1"/>
<line x1="789.3" y1="255.9" x2="794.3" y2="255.9" stroke="#c00000" stroke-width="1.3"/>
<rect x="961.0" y="251.7" width="7.8" height="7.8" fill="#4e68c4" fill-opacity="0.8" stroke="#3c50b0" stroke-opacity="0.6" stroke-width="1"/>
<line x1="962.4" y1="255.9" x2="967.4" y2="255.9" stroke="#c00000" stroke-width="1.3"/>
<rect x="441.8" y="424.8" width="7.8" height="7.8" fill="#4e68c4" fill-opacity="0.8" stroke="#3c50b0" stroke-opacity="0.6" stroke-width="1"/>
<line x1="443.2" y1="429.0" x2="448.2" y2="429.0" stroke="#c00000" stroke-width="1.3"/>
<rect x="614.9" y="424.8" width="7.8" height="7.8" fill="#4e68c4" fill-opacity="0.8" stroke="#3c50b0" stroke-opacity="0.6" stroke-width="1"/>
<line x1="616.2" y1="429.0" x2="621.2" y2="429.0" stroke="#c00000" stroke-width="1.3"/>
<rect x="787.9" y="424.8" width="7.8" height="7.8" fill="#4e68c4" fill-opacity="0.8" stroke="#3c50b0" stroke-opacity="0.6" stroke-width="1"/>
<line x1="789.3" y1="429.0" x2="794.3" y2="429.0" stroke="#c00000" stroke-width="1.3"/>
<rect x="961.0" y="424.8" width="7.8" height="7.8" fill="#4e68c4" fill-opacity="0.8" stroke="#3c50b0" stroke-opacity="0.6" stroke-width="1"/>
<line x1="962.4" y1="429.0" x2="967.4" y2="429.0" stroke="#c00000" stroke-width="1.3"/>
<rect x="441.8" y="597.9" width="7.8" height="7.8" fill="#4e68c4" fill-opacity="0.8" stroke="#3c50b0" stroke-opacity="0.6" stroke-width="1"/>
<line x1="443.2" y1="602.1" x2="448.2" y2="602.1" stroke="#c00000" stroke-width="1.3"/>
<rect x="614.9" y="597.9" width="7.8" height="7.8" fill="#4e68c4" fill-opacity="0.8" stroke="#3c50b0" stroke-opacity="0.6" stroke-width="1"/>
<line x1="616.2" y1="602.1" x2="621.2" y2="602.1" stroke="#c00000" stroke-width="1.3"/>
<rect x="787.9" y="597.9" width="7.8" height="7.8" fill="#4e68c4" fill-opacity="0.8" stroke="#3c50b0" stroke-opacity="0.6" stroke-width="1"/>
<line x1="789.3" y1="602.1" x2="794.3" y2="602.1" stroke="#c00000" stroke-width="1.3"/>
<rect x="961.0" y="597.9" width="7.8" height="7.8" fill="#4e68c4" fill-opacity="0.8" stroke="#3c50b0" stroke-opacity="0.6" stroke-width="1"/>
<line x1="962.4" y1="602.1" x2="967.4" y2="602.1" stroke="#c00000" stroke-width="1.3"/>
<rect x="441.8" y="771.0" width="7.8" height="7.8" fill="#4e68c4" fill-opacity="0.8" stroke="#3c50b0" stroke-opacity="0.6" stroke-width="1"/>
<line x1="443.2" y1="775.2" x2="448.2" y2="775.2" stroke="#c00000" stroke-width="1.3"/>
<rect x="614.9" y="771.0" width="7.8" height="7.8" fill="#4e68c4" fill-opacity="0.8" stroke="#3c50b0" stroke-opacity="0.6" stroke-width="1"/>
<line x1="616.2" y1="775.2" x2="621.2" y2="775.2" stroke="#c00000" stroke-width="1.3"/>
<rect x="787.9" y="771.0" width="7.8" height="7.8" fill="#4e68c4" fill-opacity="0.8" stroke="#3c50b0" stroke-opacity="0.6" stroke-width="1"/>
<line x1="789.3" y1="775.2" x2="794.3" y2="775.2" stroke="#c00000" stroke-width="1.3"/>
<rect x="961.0" y="771.0" width="7.8" height="7.8" fill="#4e68c4" fill-opacity="0.8" stroke="#3c50b0" stroke-opacity="0.6" stroke-width="1"/>
<line x1="962.4" y1="775.2" x2="967.4" y2="775.2" stroke="#c00000" stroke-width="1.3"/>
<text x="449.6" y="254.90" font-size="10.6" fill="#111" stroke="#111" stroke-width="0.2">0.118</text>
<text x="531.9" y="268.40" font-size="10.6" fill="#111" stroke="#111" stroke-width="0.2">0.3602</text>
<text x="602.0" y="254.90" font-size="10.6" fill="#111" stroke="#111" stroke-width="0.2">0.4078</text>
<text x="704.5" y="268.40" font-size="10.6" fill="#111" stroke="#111" stroke-width="0.2">0.1437</text>
<text x="792.6" y="254.90" font-size="10.6" fill="#111" stroke="#111" stroke-width="0.2">0.4078</text>
<text x="877.8" y="268.40" font-size="10.6" fill="#111" stroke="#111" stroke-width="0.2">0.3602</text>
<text x="950.4" y="254.60" font-size="10.6" fill="#111" stroke="#111" stroke-width="0.2">0.118</text>
<text x="449.6" y="774.20" font-size="10.6" fill="#111" stroke="#111" stroke-width="0.2">0.118</text>
<text x="531.9" y="787.70" font-size="10.6" fill="#111" stroke="#111" stroke-width="0.2">0.3602</text>
<text x="602.0" y="774.20" font-size="10.6" fill="#111" stroke="#111" stroke-width="0.2">0.4078</text>
<text x="704.5" y="787.70" font-size="10.6" fill="#111" stroke="#111" stroke-width="0.2">0.1437</text>
<text x="792.6" y="774.20" font-size="10.6" fill="#111" stroke="#111" stroke-width="0.2">0.4078</text>
<text x="877.8" y="787.70" font-size="10.6" fill="#111" stroke="#111" stroke-width="0.2">0.3602</text>
<text x="950.4" y="773.90" font-size="10.6" fill="#111" stroke="#111" stroke-width="0.2">0.118</text>
<text x="446.5" y="427.50" font-size="10.6" fill="#111" stroke="#111" stroke-width="0.2">0.1333</text>
<text x="502.2" y="441.20" font-size="10.6" fill="#111" stroke="#111" stroke-width="0.2">0.3525</text>
<text x="601.7" y="427.50" font-size="10.6" fill="#111" stroke="#111" stroke-width="0.2">0.5836</text>
<text x="704.5" y="441.20" font-size="10.6" fill="#111" stroke="#111" stroke-width="0.2">0.1002</text>
<text x="792.4" y="427.50" font-size="10.6" fill="#111" stroke="#111" stroke-width="0.2">0.5836</text>
<text x="906.4" y="441.20" font-size="10.6" fill="#111" stroke="#111" stroke-width="0.2">0.3525</text>
<text x="947.3" y="427.50" font-size="10.6" fill="#111" stroke="#111" stroke-width="0.2">0.1333</text>
<text x="446.5" y="600.60" font-size="10.6" fill="#111" stroke="#111" stroke-width="0.2">0.1333</text>
<text x="502.2" y="614.30" font-size="10.6" fill="#111" stroke="#111" stroke-width="0.2">0.3525</text>
<text x="601.7" y="600.60" font-size="10.6" fill="#111" stroke="#111" stroke-width="0.2">0.5836</text>
<text x="704.5" y="614.30" font-size="10.6" fill="#111" stroke="#111" stroke-width="0.2">0.1002</text>
<text x="792.4" y="600.60" font-size="10.6" fill="#111" stroke="#111" stroke-width="0.2">0.5836</text>
<text x="906.4" y="614.30" font-size="10.6" fill="#111" stroke="#111" stroke-width="0.2">0.3525</text>
<text x="947.3" y="600.60" font-size="10.6" fill="#111" stroke="#111" stroke-width="0.2">0.1333</text>
<text x="422.4" y="342.15" font-size="10.6" fill="#111" stroke="#111" stroke-width="0.2">0.0204</text>
<text x="502.7" y="355.35" font-size="10.6" fill="#111" stroke="#111" stroke-width="0.2">0.3064</text>
<text x="620.1" y="341.55" font-size="10.6" fill="#111" stroke="#111" stroke-width="0.2">0.065</text>
<text x="704.4" y="355.35" font-size="10.6" fill="#111" stroke="#111" stroke-width="0.2">0.0857</text>
<text x="793.0" y="341.55" font-size="10.6" fill="#111" stroke="#111" stroke-width="0.2">0.065</text>
<text x="906.4" y="355.35" font-size="10.6" fill="#111" stroke="#111" stroke-width="0.2">0.3064</text>
<text x="956.5" y="342.15" font-size="10.6" fill="#111" stroke="#111" stroke-width="0.2">0.0204</text>
<text x="422.4" y="688.85" font-size="10.6" fill="#111" stroke="#111" stroke-width="0.2">0.0204</text>
<text x="502.7" y="702.05" font-size="10.6" fill="#111" stroke="#111" stroke-width="0.2">0.3064</text>
<text x="620.1" y="688.25" font-size="10.6" fill="#111" stroke="#111" stroke-width="0.2">0.065</text>
<text x="704.4" y="702.05" font-size="10.6" fill="#111" stroke="#111" stroke-width="0.2">0.0857</text>
<text x="793.0" y="688.25" font-size="10.6" fill="#111" stroke="#111" stroke-width="0.2">0.065</text>
<text x="906.4" y="702.05" font-size="10.6" fill="#111" stroke="#111" stroke-width="0.2">0.3064</text>
<text x="956.5" y="688.85" font-size="10.6" fill="#111" stroke="#111" stroke-width="0.2">0.0204</text>
<text x="422.6" y="515.15" font-size="10.6" fill="#111" stroke="#111" stroke-width="0.2">0.0218</text>
<text x="501.8" y="528.05" font-size="10.6" fill="#111" stroke="#111" stroke-width="0.2">0.3291</text>
<text x="617.6" y="514.15" font-size="10.6" fill="#111" stroke="#111" stroke-width="0.2">0.1608</text>
<text x="704.4" y="528.05" font-size="10.6" fill="#111" stroke="#111" stroke-width="0.2">0.0582</text>
<text x="790.2" y="514.15" font-size="10.6" fill="#111" stroke="#111" stroke-width="0.2">0.1608</text>
<text x="906.1" y="528.05" font-size="10.6" fill="#111" stroke="#111" stroke-width="0.2">0.3291</text>
<text x="956.3" y="515.15" font-size="10.6" fill="#111" stroke="#111" stroke-width="0.2">0.0218</text>
<line x1="445.7" y1="774.9" x2="445.7" y2="730" stroke="#00e000" stroke-width="1.3"/>
<path d="M440.7 739 L445.7 729.8 L450.7 739" fill="none" stroke="#00e000" stroke-width="1.3"/>
<path d="M440.5 719.2 H447 M454.5 713.3 L447 719.2 L454.5 725.3" fill="none" stroke="#10f010" stroke-width="2.3" stroke-linecap="round"/>
<path d="M440.5 719.2 H447 M454.5 713.3 L447 719.2 L454.5 725.3" fill="none" stroke="#d8f0d8" stroke-width="0.7" stroke-linecap="round"/>
<line x1="445.7" y1="774.9" x2="490" y2="774.9" stroke="#ff2020" stroke-width="1.3"/>
<path d="M481 769.5 L490.5 774.9 L481 780" fill="none" stroke="#ff2020" stroke-width="1.3"/>
<path d="M496.5 766.5 L506.5 780.5 M506.5 766.5 L496.5 780.5" fill="none" stroke="#ff1010" stroke-width="2.3" stroke-linecap="round"/>
<path d="M496.5 766.5 L506.5 780.5 M506.5 766.5 L496.5 780.5" fill="none" stroke="#ffc8a0" stroke-width="0.7" stroke-linecap="round"/>
<rect x="378.30" y="797.4" width="39.99" height="24.6" fill="#c800c8"/>
<rect x="417.99" y="797.4" width="39.99" height="24.6" fill="#e10064"/>
<rect x="457.68" y="797.4" width="39.99" height="24.6" fill="#ff0000"/>
<rect x="497.37" y="797.4" width="39.99" height="24.6" fill="#ff4000"/>
<rect x="537.06" y="797.4" width="39.99" height="24.6" fill="#ff8000"/>
<rect x="576.75" y="797.4" width="39.99" height="24.6" fill="#ffaa00"/>
<rect x="616.44" y="797.4" width="39.99" height="24.6" fill="#ffd500"/>
<rect x="656.13" y="797.4" width="39.99" height="24.6" fill="#ffff00"/>
<rect x="695.82" y="797.4" width="39.99" height="24.6" fill="#80ff00"/>
<rect x="735.51" y="797.4" width="39.99" height="24.6" fill="#00ff00"/>
<rect x="775.20" y="797.4" width="39.99" height="24.6" fill="#00ff80"/>
<rect x="814.89" y="797.4" width="39.99" height="24.6" fill="#00ffff"/>
<rect x="854.58" y="797.4" width="39.99" height="24.6" fill="#00aaff"/>
<rect x="894.27" y="797.4" width="39.99" height="24.6" fill="#0055ff"/>
<rect x="933.96" y="797.4" width="40.84" height="24.6" fill="#0000ff"/>
<line x1="378.3" y1="797.5" x2="418.0" y2="822" stroke="#fff" stroke-opacity="0.35" stroke-width="0.8"/>
<line x1="418.0" y1="797.5" x2="457.7" y2="822" stroke="#fff" stroke-opacity="0.35" stroke-width="0.8"/>
<line x1="457.7" y1="797.5" x2="497.4" y2="822" stroke="#fff" stroke-opacity="0.35" stroke-width="0.8"/>
<line x1="497.4" y1="797.5" x2="537.1" y2="822" stroke="#fff" stroke-opacity="0.35" stroke-width="0.8"/>
<line x1="537.1" y1="797.5" x2="576.8" y2="822" stroke="#fff" stroke-opacity="0.35" stroke-width="0.8"/>
<line x1="576.8" y1="797.5" x2="616.4" y2="822" stroke="#fff" stroke-opacity="0.35" stroke-width="0.8"/>
<line x1="616.4" y1="797.5" x2="656.1" y2="822" stroke="#fff" stroke-opacity="0.35" stroke-width="0.8"/>
<line x1="656.1" y1="797.5" x2="695.8" y2="822" stroke="#fff" stroke-opacity="0.35" stroke-width="0.8"/>
<line x1="695.8" y1="797.5" x2="735.5" y2="822" stroke="#fff" stroke-opacity="0.35" stroke-width="0.8"/>
<line x1="735.5" y1="797.5" x2="775.2" y2="822" stroke="#fff" stroke-opacity="0.35" stroke-width="0.8"/>
<line x1="775.2" y1="797.5" x2="814.9" y2="822" stroke="#fff" stroke-opacity="0.35" stroke-width="0.8"/>
<line x1="814.9" y1="797.5" x2="854.6" y2="822" stroke="#fff" stroke-opacity="0.35" stroke-width="0.8"/>
<line x1="854.6" y1="797.5" x2="894.3" y2="822" stroke="#fff" stroke-opacity="0.35" stroke-width="0.8"/>
<line x1="894.3" y1="797.5" x2="934.0" y2="822" stroke="#fff" stroke-opacity="0.35" stroke-width="0.8"/>
<line x1="934.0" y1="797.5" x2="973.7" y2="822" stroke="#fff" stroke-opacity="0.35" stroke-width="0.8"/>
<text x="418.49" y="816" font-size="16" fill="#1a1a1a" text-anchor="middle">-150</text>
<text x="458.18" y="816" font-size="16" fill="#1a1a1a" text-anchor="middle">-135</text>
<text x="497.87" y="816" font-size="16" fill="#1a1a1a" text-anchor="middle">-120</text>
<text x="537.56" y="816" font-size="16" fill="#1a1a1a" text-anchor="middle">-105</text>
<text x="577.25" y="816" font-size="16" fill="#1a1a1a" text-anchor="middle">-90</text>
<text x="616.94" y="816" font-size="16" fill="#1a1a1a" text-anchor="middle">-75</text>
<text x="656.63" y="816" font-size="16" fill="#1a1a1a" text-anchor="middle">-60</text>
<text x="696.32" y="816" font-size="16" fill="#1a1a1a" text-anchor="middle">-45</text>
<text x="736.01" y="816" font-size="16" fill="#1a1a1a" text-anchor="middle">-30</text>
<text x="775.70" y="816" font-size="16" fill="#1a1a1a" text-anchor="middle">-15</text>
<text x="815.39" y="816" font-size="16" fill="#1a1a1a" text-anchor="middle">0</text>
<text x="855.08" y="816" font-size="16" fill="#1a1a1a" text-anchor="middle">15</text>
<text x="894.77" y="816" font-size="16" fill="#1a1a1a" text-anchor="middle">30</text>
<text x="934.46" y="816" font-size="16" fill="#1a1a1a" text-anchor="middle">45</text>
</svg>
</body></html>
